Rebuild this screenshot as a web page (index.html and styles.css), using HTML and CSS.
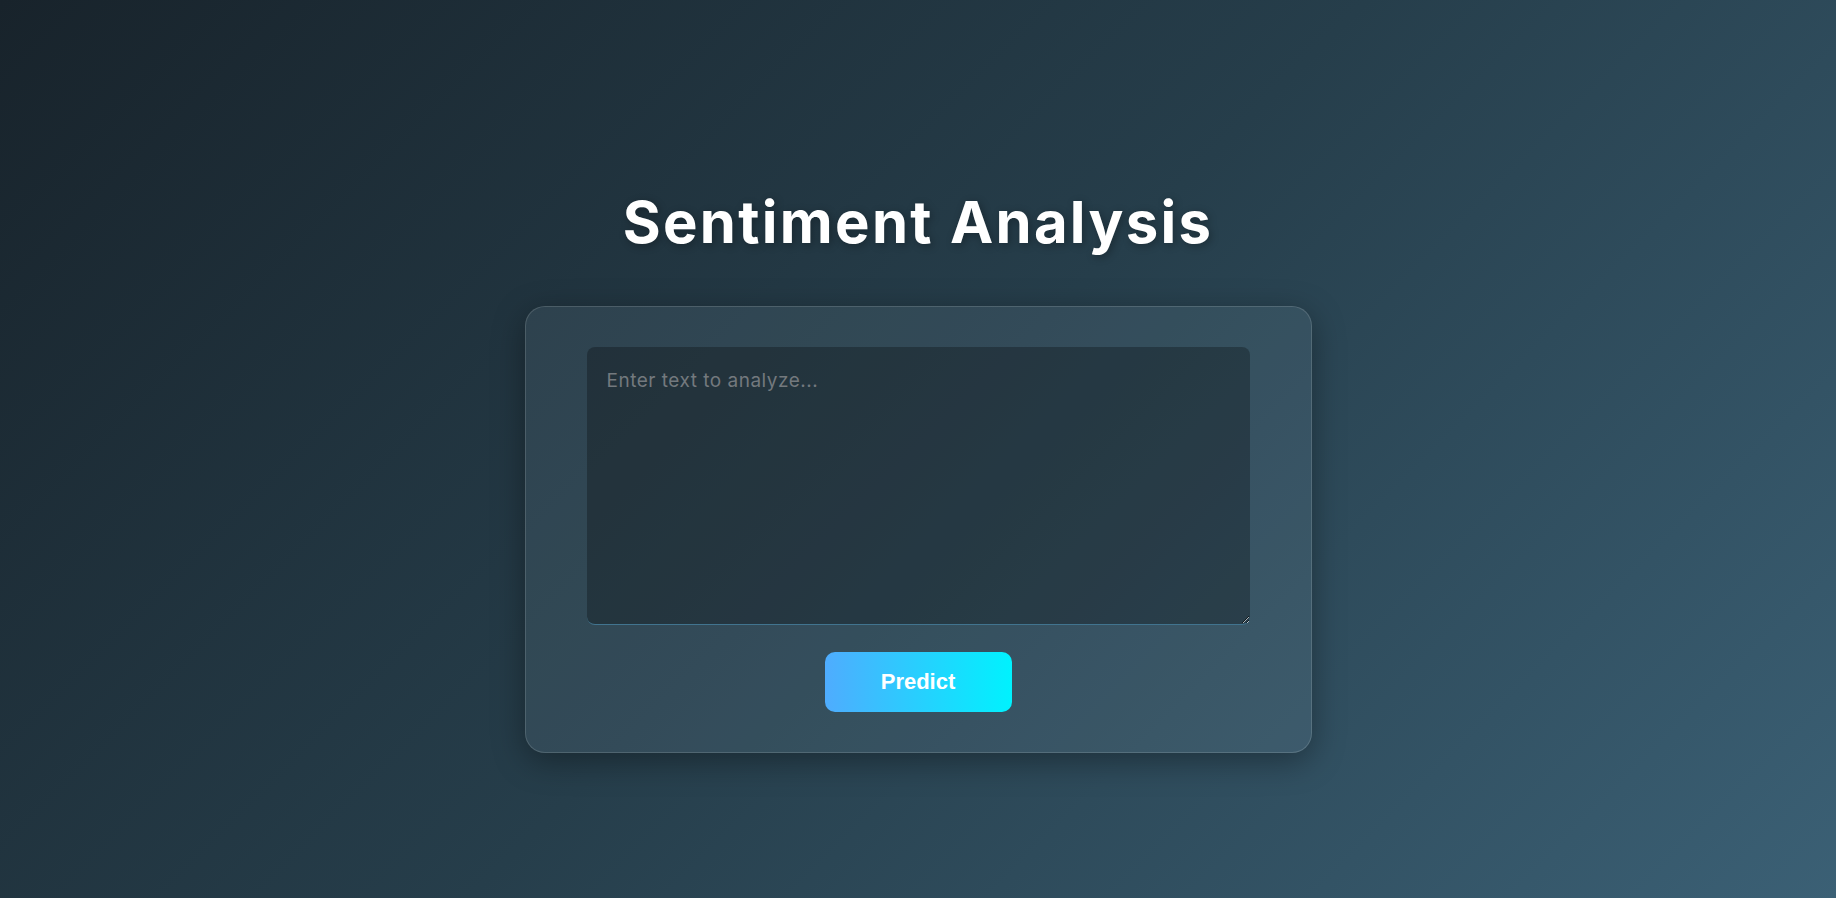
FILE: index.html
```html
<!DOCTYPE html>
<html lang="en">
<head>
<meta charset="utf-8">
<title>Sentiment Analysis</title>
<link rel="stylesheet" href="styles.css">
</head>
<body>
<main class="page">
  <h1 class="title">Sentiment Analysis</h1>
  <div class="card">
    <textarea class="input" placeholder="Enter text to analyze..."></textarea>
    <button class="predict" type="button">Predict</button>
  </div>
</main>
</body>
</html>
```

FILE: styles.css
```css
* { box-sizing: border-box; }
html, body { margin: 0; height: 100%; }
body {
  background: linear-gradient(135deg, #18232b 0%, #263e4b 50%, #3b6075 100%);
  font-family: Inter, "Open Sans", sans-serif;
  overflow: hidden;
}
.page {
  display: flex;
  flex-direction: column;
  align-items: center;
  padding-top: 187px;
}
.title {
  margin: 0 0 49px;
  font-family: Inter, sans-serif;
  font-weight: 700;
  font-size: 58px;
  line-height: 70px;
  letter-spacing: 2.3px;
  color: #ffffff;
  text-shadow: 2px 2px 8px rgba(0, 0, 0, 0.3);
}
.card {
  width: 787px;
  display: flex;
  flex-direction: column;
  align-items: center;
  padding: 40px 61px;
  background: rgba(170, 200, 220, 0.1);
  border: 1px solid rgba(255, 255, 255, 0.14);
  border-radius: 20px;
  box-shadow: 0 8px 32px rgba(0, 0, 0, 0.35);
}
.input {
  width: 100%;
  height: 278px;
  padding: 20px;
  border: none;
  border-bottom: 1px solid #41748f;
  border-radius: 8px;
  background: rgba(0, 0, 0, 0.27);
  color: #e8eef2;
  font-family: Inter, sans-serif;
  font-size: 19px;
  line-height: 27px;
  letter-spacing: 0.5px;
  outline: none;
  resize: vertical;
}
.input::placeholder { color: #73797e; }
.predict {
  margin-top: 27px;
  width: 187px;
  height: 60px;
  border: none;
  border-radius: 10px;
  background: linear-gradient(90deg, #4facfe 0%, #00f2fe 100%);
  color: #ffffff;
  font-family: "Liberation Sans", Arial, sans-serif;
  font-weight: 700;
  font-size: 22px;
  cursor: pointer;
}
```
